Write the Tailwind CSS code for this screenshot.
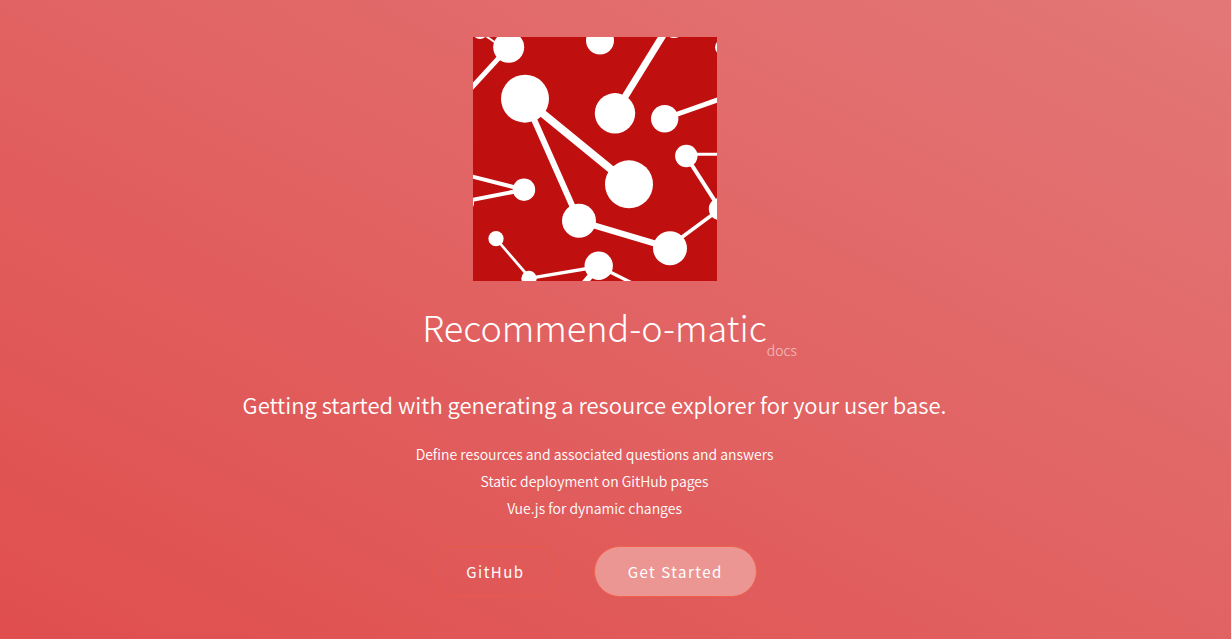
<!DOCTYPE html>
<html lang="en">
<head>
<meta charset="utf-8">
<meta name="viewport" content="width=device-width, initial-scale=1">
<title>Recommend-o-matic docs</title>
<script src="https://cdn.jsdelivr.net/npm/@tailwindcss/browser@4"></script>
</head>
<body class="font-['Noto_Sans_CJK_SC','Noto_Sans',sans-serif] text-white">
<main class="flex min-h-screen flex-col items-center bg-[linear-gradient(to_left_bottom,#e37777,#e04e4e)] pt-[37px] pr-[42px] pb-[42px] text-center">
  <svg class="size-[244px]" viewBox="0 0 244 244" role="img" aria-label="Recommend-o-matic logo">
    <rect width="244" height="244" fill="#bf0f0f"/>
    <g stroke="#fff" fill="none">
      <path stroke-width="2" d="M7 -5L36 15"/>
      <path stroke-width="5" d="M36 10L-4 53.500"/>
      <path stroke-width="8" d="M52 62L156 147"/>
      <path stroke-width="6" d="M52 62L106 184L197 211"/>
      <path stroke-width="7" d="M142 76L192 -5"/>
      <path stroke-width="5" d="M192 81.500L248 61.700"/>
      <path stroke-width="3" d="M213 117.300H248"/>
      <path stroke-width="4" d="M213 119L247 172"/>
      <path stroke-width="3.500" d="M247 172L197 209"/>
      <path stroke-width="4" d="M-4 138.700L51 152.700L-4 163.500"/>
      <path stroke-width="2.700" d="M23 201.700L56 240"/>
      <path stroke-width="3.300" d="M56 241.300L126 229.500L167 250"/>
      <path stroke-width="6" d="M126 229L108 250"/>
    </g>
    <g fill="#fff">
      <circle cx="7" cy="-6" r="8"/>
      <circle cx="35.700" cy="10.300" r="15.500"/>
      <circle cx="52" cy="61.700" r="24"/>
      <circle cx="127" cy="3.500" r="14"/>
      <circle cx="201" cy="-10" r="11"/>
      <circle cx="250" cy="10.300" r="8"/>
      <circle cx="142" cy="76.300" r="20.200"/>
      <circle cx="191.700" cy="81.700" r="13.700"/>
      <circle cx="213.300" cy="119" r="11.200"/>
      <circle cx="156" cy="147.300" r="24"/>
      <circle cx="51" cy="152.700" r="11.200"/>
      <circle cx="-7" cy="166" r="8"/>
      <circle cx="106" cy="183.700" r="17"/>
      <circle cx="247" cy="172" r="11.200"/>
      <circle cx="197" cy="211.300" r="17"/>
      <circle cx="125.700" cy="228.700" r="14.200"/>
      <circle cx="23" cy="201.700" r="7.600"/>
      <circle cx="56" cy="241.300" r="7.600"/>
    </g>
  </svg>
  <h1 class="relative mt-5 text-4xl leading-[50px] font-light">Recommend-o-matic<small class="absolute -bottom-[11px] left-full text-sm leading-6 opacity-60">docs</small></h1>
  <p class="mt-[38px] text-[22px] leading-[30px] font-[350]">Getting started with generating a resource explorer for your user base.</p>
  <ul class="mt-[22px] text-sm leading-[27px] font-[350]">
    <li>Define resources and associated questions and answers</li>
    <li>Static deployment on GitHub pages</li>
    <li>Vue.js for dynamic changes</li>
  </ul>
  <nav class="mt-6 flex gap-[35px] text-[15px] leading-[49px] tracking-widest">
    <a href="#github" class="rounded-full border border-[#ea5a48] px-[33px]">GitHub</a>
    <a href="#start" class="rounded-full border border-[#f0614c] bg-[#ec9694] px-[33px]">Get Started</a>
  </nav>
</main>
</body>
</html>
